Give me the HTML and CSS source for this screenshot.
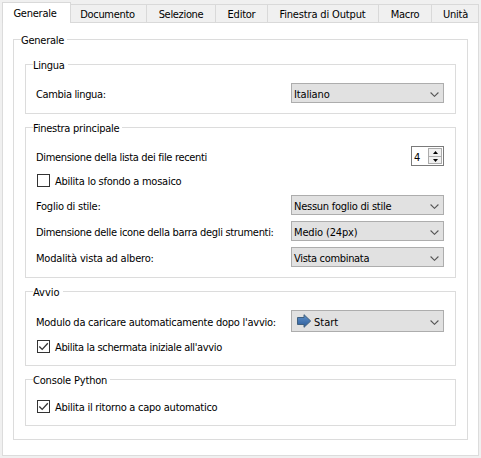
FILE: index.html
```html
<!DOCTYPE html>
<html lang="it">
<head>
<meta charset="utf-8">
<title>Preferenze</title>
<link rel="stylesheet" href="styles.css">
</head>
<body>
<nav class="tabs">
  <span class="tab active">Generale</span>
  <span class="tab documento tight">Documento</span>
  <span class="tab selezione tight">Selezione</span>
  <span class="tab editor">Editor</span>
  <span class="tab output loose">Finestra di Output</span>
  <span class="tab macro">Macro</span>
  <span class="tab units">Unità</span>
</nav>
<main class="page">
  <section class="group outer">
    <h2>Generale</h2>
    <section class="group lingua">
      <h2>Lingua</h2>
      <div class="row"><span class="tighter">Cambia lingua:</span>
        <div class="combo"><span class="loose">Italiano</span><svg class="chev" viewBox="0 0 9 5"><path d="M.6.5 4.500 4.300 8.400.5"/></svg></div></div>
    </section>
    <section class="group principale">
      <h2>Finestra principale</h2>
      <div class="row"><span class="tight">Dimensione della lista dei file recenti</span>
        <div class="spin"><span>4</span>
          <div class="steps">
            <i><svg viewBox="0 0 5 3"><path d="M0 3 2.5 0 5 3z"/></svg></i>
            <i><svg viewBox="0 0 5 3"><path d="M0 0 2.5 3 5 0z"/></svg></i>
          </div></div></div>
      <div class="check"><span class="box"></span><span class="label">Abilita lo sfondo a mosaico</span></div>
      <div class="row"><span>Foglio di stile:</span>
        <div class="combo"><span>Nessun foglio di stile</span><svg class="chev" viewBox="0 0 9 5"><path d="M.6.5 4.500 4.300 8.400.5"/></svg></div></div>
      <div class="row"><span class="tight">Dimensione delle icone della barra degli strumenti:</span>
        <div class="combo"><span class="loose">Medio (24px)</span><svg class="chev" viewBox="0 0 9 5"><path d="M.6.5 4.500 4.300 8.400.5"/></svg></div></div>
      <div class="row"><span class="modal">Modalità vista ad albero:</span>
        <div class="combo"><span class="tight">Vista combinata</span><svg class="chev" viewBox="0 0 9 5"><path d="M.6.5 4.500 4.300 8.400.5"/></svg></div></div>
    </section>
    <section class="group avvio">
      <h2 class="natural">Avvio</h2>
      <div class="row"><span>Modulo da caricare automaticamente dopo l'avvio:</span>
        <div class="combo tall">
          <svg class="arrow" viewBox="0 0 16 16"><defs><linearGradient id="blue" x1="0" y1="0" x2="0" y2="1"><stop offset="0" stop-color="#5f92cb"/><stop offset="1" stop-color="#2b5a98"/></linearGradient></defs><path d="M1.5 4.5H8V1.7L14.7 8 8 14.3V11.500H1.500z"/></svg>
          <span class="natural">Start</span><svg class="chev" viewBox="0 0 9 5"><path d="M.6.5 4.500 4.300 8.400.5"/></svg></div></div>
      <div class="check"><span class="box"><svg viewBox="0 0 11 11"><path d="M1.300 5.500 4.200 8.400 9.800 2.300"/></svg></span><span class="label tighter">Abilita la schermata iniziale all'avvio</span></div>
    </section>
    <section class="group console">
      <h2 class="python">Console Python</h2>
      <div class="check"><span class="box"><svg viewBox="0 0 11 11"><path d="M1.300 5.500 4.200 8.400 9.800 2.300"/></svg></span><span class="label">Abilita il ritorno a capo automatico</span></div>
    </section>
  </section>
</main>
</body>
</html>
```
FILE: styles.css
```css
* { box-sizing: border-box; }
body {
  margin: 0;
  height: 458px;
  padding: 2px;
  overflow: hidden;
  background: #f0f0f0;
  color: #000;
  font: 11px/16px "DejaVu Sans Condensed", "DejaVu Sans", sans-serif;
  font-stretch: condensed;
  letter-spacing: -0.25px;
  white-space: nowrap;
}
.natural { letter-spacing: 0; }
.loose { letter-spacing: -0.15px; }
.modal, .python { letter-spacing: -0.18px; }
.tight { letter-spacing: -0.32px; }
.tighter { letter-spacing: -0.35px; }
.tabs { display: flex; align-items: flex-end; height: 21px; width: 477px; }
.tab {
  height: 19px;
  border: 1px solid #d9d9d9;
  border-left: 0;
  line-height: 19px;
  text-align: center;
}
.tab.active {
  position: relative;
  width: 69px;
  height: 21px;
  border-left: 1px solid #d9d9d9;
  border-bottom: 0;
  background: #fff;
  line-height: 21px;
  padding-right: 3px;
}
.documento { width: 76px; padding-right: 2px; }
.selezione { width: 69px; }
.editor { width: 52px; }
.output { width: 111px; padding-right: 1px; }
.macro { width: 53px; }
.units { width: 47px; padding-left: 1px; }
.page {
  width: 477px;
  height: 433px;
  border: 1px solid #dcdcdc;
  border-top: 0;
  background: #fff;
  padding: 16px 10px;
}
.group { border: 1px solid #dcdcdc; }
.outer { height: 401px; padding: 0 11px; }
h2 {
  width: fit-content;
  height: 16px;
  margin: -8px 0 0 -4px;
  padding-right: 3px;
  background: #fff;
  font: inherit;
  line-height: 18px;
}
.outer > .group { padding: 0 11px 0 10px; margin-bottom: 13px; }
.outer > h2 { margin-bottom: 16px; }
.lingua { height: 50px; }
.principale { height: 151px; }
.avvio { height: 75px; }
.console { height: 47px; }
.outer > .group > h2 { margin-left: -3px; margin-bottom: 10px; }
.outer > .console > h2 { margin-bottom: 12px; }
.row {
  display: flex;
  justify-content: space-between;
  align-items: center;
  height: 20px;
  margin-bottom: 6px;
}
.row span { padding-top: 3px; }
.avvio .row { height: 22px; margin-bottom: 8px; }
.combo {
  display: flex;
  align-items: center;
  width: 153px;
  height: 20px;
  padding: 0 4px 0 2px;
  border: 1px solid #adadad;
  background: #e1e1e1;
}
.tall { height: 22px; padding-left: 4px; }
.chev { width: 9px; height: 5px; margin: 2px 0 0 auto; fill: none; stroke: #555; stroke-width: 1.1; }
.arrow { width: 16px; height: 16px; margin-right: 2px; fill: url(#blue); stroke: #40607f; stroke-width: 1; }
.spin {
  display: flex;
  align-items: center;
  justify-content: space-between;
  width: 33px;
  height: 20px;
  padding: 0 1px 0 2px;
  border: 1px solid #7a7a7a;
  background: #fff;
}
.steps { display: grid; width: 14px; height: 16px; border: 1px solid #acacac; background: #f0f0f0; }
.steps i { display: grid; place-items: center; height: 7px; }
.steps i + i { border-top: 1px solid #acacac; height: 7px; }
.steps svg { display: block; width: 5px; height: 3px; fill: #000; }
.check { display: flex; align-items: center; gap: 5px; height: 13px; padding-left: 1px; }
.check .label { padding-top: 2px; }
.principale .check { margin: 8px 0; }
.box { width: 13px; height: 13px; border: 1px solid #333; background: #fff; }
.box svg { display: block; width: 11px; height: 11px; fill: none; stroke: #333; stroke-width: 1.3; }
```
